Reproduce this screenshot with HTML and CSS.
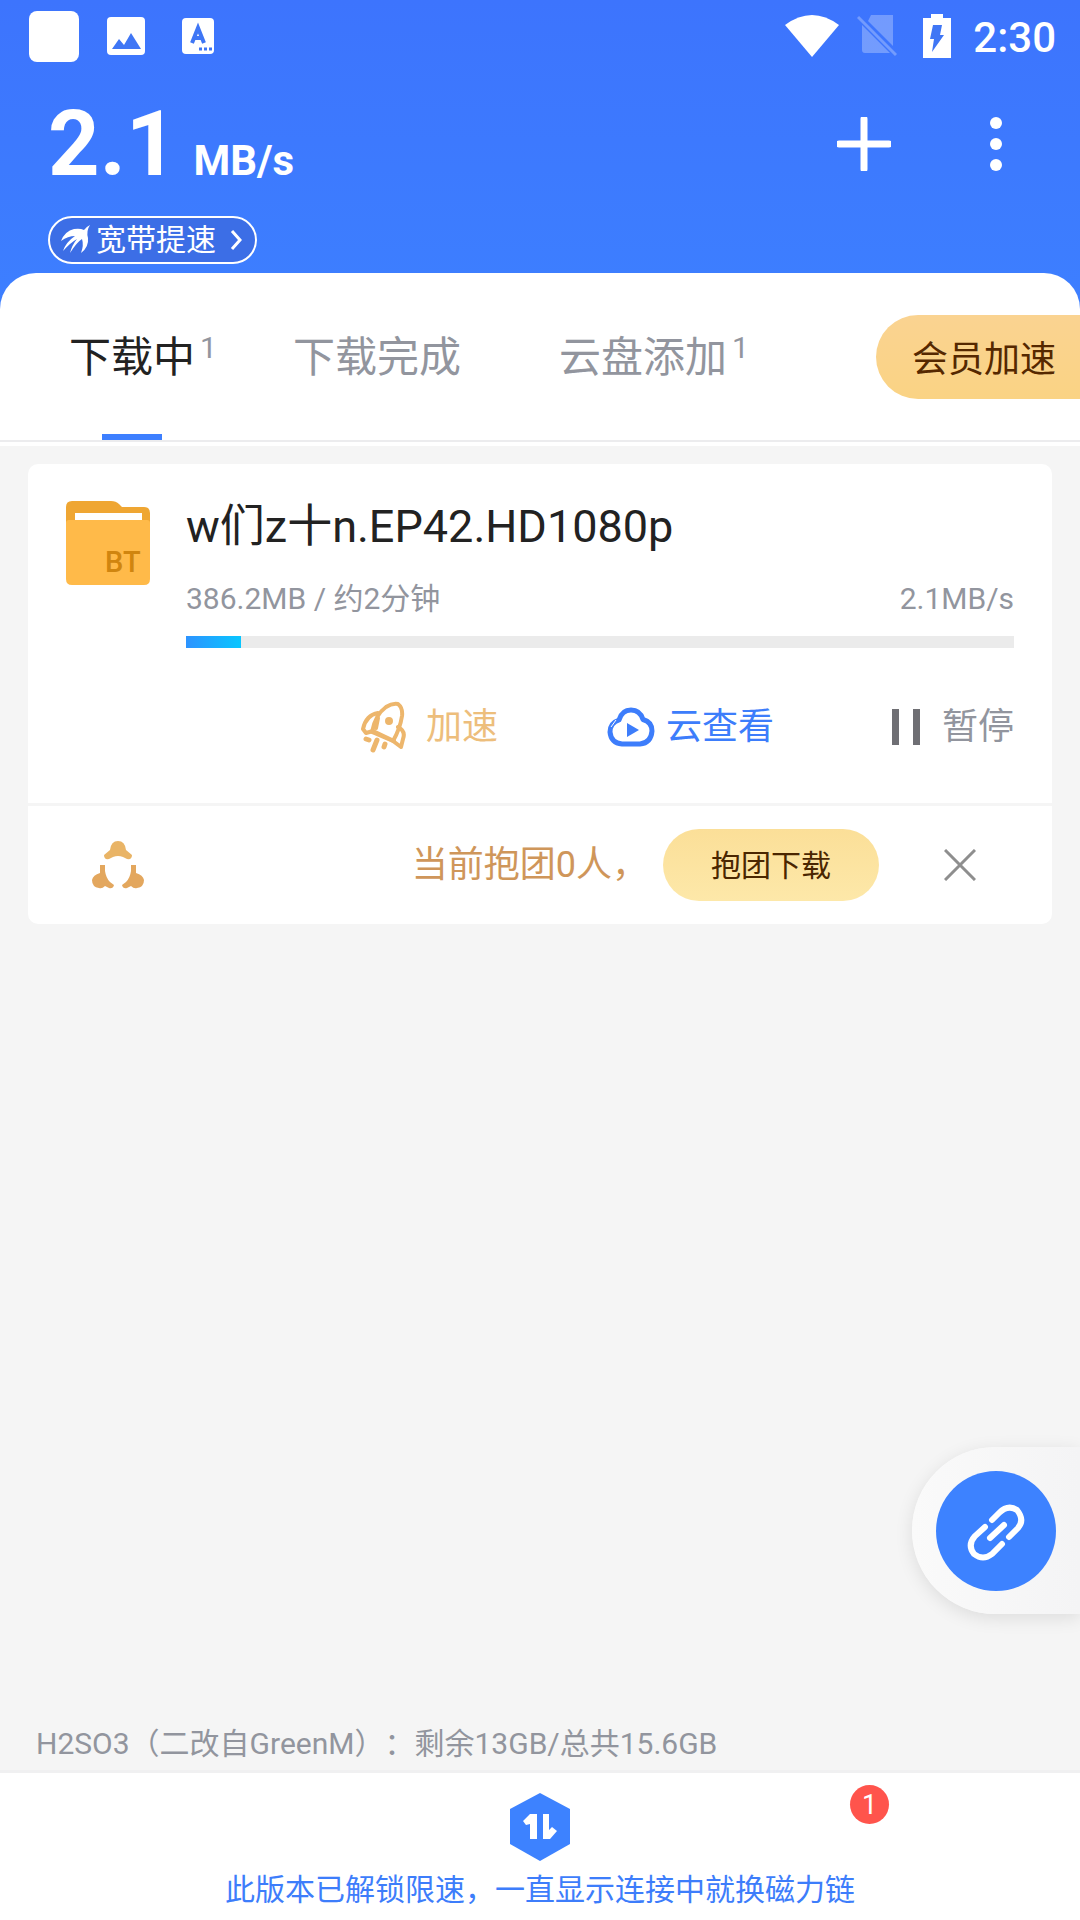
FILE: index.html
```html
<!DOCTYPE html>
<html lang="zh-CN">
<head>
<meta charset="utf-8">
<meta name="viewport" content="width=device-width, initial-scale=1">
<title>下载中</title>
<link rel="stylesheet" href="styles.css">
</head>
<body>
<header class="header">
  <div class="status">
    <div class="status-left">
      <span class="status-app"></span>
      <svg width="38" height="38" viewBox="0 0 38 38"><rect width="38" height="38" rx="4" fill="#fff"/><path d="M5 32 12 22l5 6 7-12 10 16z" fill="#3f76f5"/></svg>
      <svg width="32" height="36" viewBox="0 0 32 36"><rect width="32" height="36" rx="4" fill="#fff"/><path d="M10 25 16 10 22 25M12 20h8" fill="none" stroke="#3f76f5" stroke-width="4"/><path d="M17 31h3m2 0h3m2 0h3" stroke="#3f76f5" stroke-width="3"/></svg>
    </div>
    <div class="status-right">
      <svg class="wifi" width="54" height="42" viewBox="0 0 54 42"><path d="M0 10Q27-10 54 10L27 42z" fill="#fff"/></svg>
      <svg class="sim" width="40" height="44" viewBox="0 0 40 44"><path d="M14 1H36V32L11 7zM5 11 33 39H8Q5 39 5 36z" fill="#fff" opacity=".28"/><path d="M1 3 39 41" stroke="#fff" stroke-width="3" opacity=".28"/></svg>
      <svg class="battery" width="28" height="44" viewBox="0 0 28 44"><path d="M8 0H20V4H28V44H0V4H8z" fill="#fff"/><path d="M10 11h9l-2 10h4L9 38l2-13H7z" fill="#3f76f5"/></svg>
      <span class="clock">2:30</span>
    </div>
  </div>
  <div class="topbar">
    <p class="speed">2.1<span class="speed-unit">MB/s</span></p>
    <div class="topbar-actions">
      <button class="icon-button" type="button" aria-label="新建"><svg width="54" height="54" viewBox="0 0 54 54"><path d="M27 2V52M2 27H52" stroke="#fff" stroke-width="7" stroke-linecap="round"/></svg></button>
      <button class="icon-button" type="button" aria-label="更多"><svg width="54" height="54" viewBox="0 0 54 54" fill="#fff"><circle cx="27" cy="6" r="6"/><circle cx="27" cy="27" r="6"/><circle cx="27" cy="48" r="6"/></svg></button>
    </div>
  </div>
  <button class="boost" type="button">
    <svg width="30" height="30" viewBox="0 0 30 30" fill="#fff"><path d="M29 0Q25 6 27 13 28 22 20 28 23 20 21 14 16 17 9 28 11 20 16 14 9 18 2 26 5 17 14 11 7 11 0 16 4 6 13 4 19 3 23 5 25 2 29 0z"/></svg>
    <span>宽带提速</span>
    <svg width="12" height="20" viewBox="0 0 12 20"><path d="M2 1l8 9-8 9" fill="none" stroke="#fff" stroke-width="3"/></svg>
  </button>
</header>

<nav class="tabs">
  <a class="tab tab-active" href="#downloading"><span>下载中</span><span class="count">1</span></a>
  <a class="tab" href="#finished"><span>下载完成</span></a>
  <a class="tab" href="#cloud"><span>云盘添加</span><span class="count">1</span></a>
  <button class="vip" type="button">会员加速</button>
</nav>

<main class="content">
  <article class="card">
    <div class="task">
      <svg class="folder" width="84" height="84" viewBox="0 0 84 84">
        <path d="M6 0H45Q50 0 53 3L56 6H78Q84 6 84 12V40H0V6Q0 0 6 0z" fill="#efa633"/>
        <path d="M9 12H76V24H9z" fill="#fff"/>
        <path d="M0 22Q0 19 3 19H81Q84 19 84 22V78Q84 84 78 84H6Q0 84 0 78z" fill="#ffba49"/>
        <text class="folder-label" x="39" y="71">BT</text>
      </svg>
      <div class="task-body">
        <h2 class="task-title">w们z十n.EP42.HD1080p</h2>
        <div class="task-meta"><span>386.2MB / 约2分钟</span><span>2.1MB/s</span></div>
        <div class="track"><div class="fill" style="width:6.7%"></div></div>
      </div>
    </div>
    <div class="actions">
      <button class="action action-gold" type="button">
        <svg width="46" height="52" viewBox="0 0 46 52" fill="none" stroke="#edb66c" stroke-width="4" stroke-linejoin="round" stroke-linecap="round"><path d="M11 31Q14 14 25 6q6-4 12-3 5 4 4 12-2 13-9 25z"/><path d="M17 12Q5 14 2 28L5 32 12 30M37 26Q45 30 42 38L40 46 32 40"/><circle cx="28" cy="20" r="2"/><path d="M12 30l21 10M17 17l-2 10" /><path d="M5 38l3 1M16 39l-4 10M24 43l-1 3" stroke-width="5"/></svg>
        <span>加速</span>
      </button>
      <button class="action action-blue" type="button">
        <svg width="48" height="40" viewBox="0 0 48 40"><path d="M12 13Q15 3 24 3 33 3 36 12.500 45 15 45 24 44 36 33 37H15Q4 36 3 25 3 16 12 13z" fill="none" stroke="#3d7dfb" stroke-width="5" stroke-linejoin="round"/><path d="M20 16 32 23 20 30z" fill="#3d7dfb"/><path d="M4 20 9 13" stroke="#fff" stroke-width="1"/></svg>
        <span>云查看</span>
      </button>
      <button class="action action-pause" type="button">
        <svg width="28" height="36" viewBox="0 0 28 36" fill="#6f6f74"><path d="M0 0H7V36H0zM21 0h7v36h-7z"/></svg>
        <span>暂停</span>
      </button>
    </div>
    <div class="group">
      <svg width="52" height="48" viewBox="0 0 52 48" fill="#e3a75e"><path fill="#e9b466" d="M18 9Q19 0 26 0 33 0 34 9L40 14Q40 19 35 18L31 16Q26 14 21 16L17 18Q12 19 12 14z"/><path d="M8 24H13V30Q14 37 18 41L22 44Q21 48 17 47L13 45Q10 48 7 47 0 46 0 39 1 34 8 32z"/><path d="M44 24H39V30Q38 37 34 41L30 44Q31 48 35 47L39 45Q42 48 45 47 52 46 52 39 51 34 44 32z"/></svg>
      <p class="group-text">当前抱团0人，</p>
      <button class="group-join" type="button">抱团下载</button>
      <button class="icon-button" type="button" aria-label="关闭"><svg width="32" height="32" viewBox="0 0 32 32"><path d="M1 1 31 31M31 1 1 31" stroke="#8e8e8e" stroke-width="3"/></svg></button>
    </div>
  </article>
  <p class="storage">H2SO3（二改自GreenM）：剩余13GB/总共15.6GB</p>
</main>

<div class="link-dock">
  <button class="link-button" type="button" aria-label="添加链接"><svg width="60" height="60" viewBox="0 0 60 60" fill="none" stroke="#fff" stroke-width="6" stroke-linecap="round"><path d="M26 19 33 12Q42 3 51 9 59 19 52 27L43 36"/><path d="M19 26 9 35Q1 44 8 53 17 60 26 53L36 43"/><path d="M24 37 38 24"/></svg></button>
</div>

<footer class="bottom">
  <a class="bottom-link" href="#downloading">
    <svg width="60" height="68" viewBox="0 0 60 68"><path d="M30 0 60 16V51L30 68 0 51V16z" fill="#3d82ff"/><path d="M20 21h7V46H20V31L16 32 13 28zM33 21h6V37L42 34 47 38 40 46H33z" fill="#fff"/></svg>
    <span>此版本已解锁限速，一直显示连接中就换磁力链</span>
    <span class="badge">1</span>
  </a>
</footer>
</body>
</html>
```
FILE: styles.css
```css
* { box-sizing: border-box; margin: 0; padding: 0; }

body {
  min-height: 100vh;
  display: flex;
  flex-direction: column;
  background: #f5f5f5;
  color: #222;
  font-family: Roboto, "Noto Sans CJK SC", sans-serif;
  font-size: 30px;
  text-spacing-trim: space-all;
}

button {
  border: 0;
  background: none;
  color: inherit;
  font: inherit;
  cursor: pointer;
}

a { color: inherit; text-decoration: none; }
svg { display: block; flex: none; }

.header {
  padding: 0 24px 45px;
  margin-bottom: -36px;
  background: linear-gradient(#3d74fd, #3d7fff);
  color: #fff;
}

.status {
  height: 72px;
  display: flex;
  align-items: center;
  justify-content: space-between;
}

.status-left, .status-right { display: flex; align-items: center; }
.status-left { gap: 28px; padding-left: 5px; }
.status-left svg + svg { margin-left: 9px; }
.status-app { width: 50px; height: 51px; border-radius: 8px; background: #fff; }
.sim { margin-left: 18px; }
.battery { margin-left: 26px; }
.clock { margin-left: 22px; font-size: 42px; font-weight: 500; line-height: 68px; padding-top: 4px; }

.topbar {
  height: 144px;
  padding-left: 24px;
  display: flex;
  align-items: center;
  justify-content: space-between;
}

.speed { padding-top: 18px; font-size: 90px; font-weight: 700; line-height: 126px; }
.speed-unit { margin-left: 16px; font-size: 42px; }
.topbar-actions { display: flex; gap: 78px; padding-right: 33px; }
.icon-button { display: block; }

.boost {
  height: 48px;
  margin-left: 24px;
  padding: 0 13px 0 11px;
  display: flex;
  align-items: center;
  gap: 5px;
  border: 2px solid #fff;
  border-radius: 24px;
  background: #3c6ee6;
  font-size: 30px;
  line-height: 44px;
}

.boost svg:last-child { margin-left: 9px; }

.tabs {
  height: 173px;
  padding: 0 0 4px 69px;
  display: flex;
  align-items: stretch;
  gap: 72px;
  border-radius: 36px 36px 0 0;
  background: #fff linear-gradient(#ececee, #ececee) 0 167px / 100% 2px no-repeat;
}

.tab {
  height: 167px;
  display: grid;
  grid-template-columns: auto 26px;
  grid-template-rows: 161px 6px;
  color: #92959e;
  font-size: 42px;
  line-height: 170px;
  white-space: nowrap;
}

.count { padding-left: 5px; color: #92959e; font-size: 30px; line-height: 150px; }
.tab-active { color: #222; }
.tab-active::after { content: ""; width: 60px; grid-row: 2; justify-self: center; background: #3d7fff; }

.vip {
  height: 84px;
  margin: 42px 0 0 auto;
  padding: 0 24px 2px 36px;
  border-radius: 42px 0 0 42px;
  background: linear-gradient(#fad391, #fad384);
  color: #552800;
  font-size: 36px;
  white-space: nowrap;
}

.content {
  flex: 1;
  padding: 18px 28px 0;
  display: flex;
  flex-direction: column;
  justify-content: space-between;
}

.card { border-radius: 10px; background: #fff; }

.task { display: flex; gap: 36px; padding: 37px 38px 0; }
.folder-label { font: 500 29px Roboto, sans-serif; fill: #d0850f; }
.task-body { flex: 1; }
.task-title { font-size: 45px; font-weight: 400; line-height: 52px; }

.task-meta {
  margin-top: 24px;
  display: flex;
  justify-content: space-between;
  color: #92959e;
  line-height: 44px;
}

.track { height: 12px; margin-top: 15px; background: #ebebeb; }
.fill { height: 100%; background: linear-gradient(90deg, #2d93ff, #08c6ff); }

.actions {
  height: 158px;
  padding: 2px 38px 0;
  display: flex;
  align-items: center;
  justify-content: flex-end;
  gap: 109px;
  border-bottom: 3px solid #f5f5f5;
  font-size: 36px;
}

.action { display: flex; align-items: center; line-height: 52px; white-space: nowrap; }
.action-gold { gap: 19px; color: #edbe7c; }
.action-blue { gap: 11px; color: #3d7dfb; }
.action-pause { gap: 22px; margin-left: 9px; color: #92959e; }

.group {
  height: 118px;
  padding: 0 76px 0 64px;
  display: flex;
  align-items: center;
}

.group-text { margin: 0 15px 0 auto; padding-bottom: 8px; color: #cf965a; font-size: 36px; }

.group-join {
  height: 72px;
  margin-right: 65px;
  padding: 0 48px 4px;
  border-radius: 36px;
  background: linear-gradient(#fbdf98, #fde8a9);
  color: #4a2600;
  white-space: nowrap;
}

.storage { padding: 0 8px 4px; color: #92959e; line-height: 44px; }

.link-dock {
  position: fixed;
  right: 0;
  bottom: 306px;
  padding: 24px 24px 23px;
  border-radius: 84px 0 0 84px;
  background: linear-gradient(90deg, #fafafa, #f4f4f5);
  box-shadow: 0 4px 18px rgba(0, 0, 0, .1);
}

.link-button {
  width: 120px;
  height: 120px;
  display: grid;
  place-items: center;
  border-radius: 50%;
  background: #3d82ff;
}

.bottom { border-top: 3px solid #f0f0f1; background: #fff; }

.bottom-link {
  position: relative;
  padding: 20px 0 8px;
  display: flex;
  flex-direction: column;
  align-items: center;
  gap: 7px;
  color: #3d7dfb;
  line-height: 44px;
}

.badge {
  position: absolute;
  top: 12px;
  left: calc(50% + 310px);
  width: 39px;
  height: 39px;
  border-radius: 50%;
  background: #ff544c;
  color: #fff;
  font-size: 27px;
  line-height: 40px;
  text-align: center;
}
```
